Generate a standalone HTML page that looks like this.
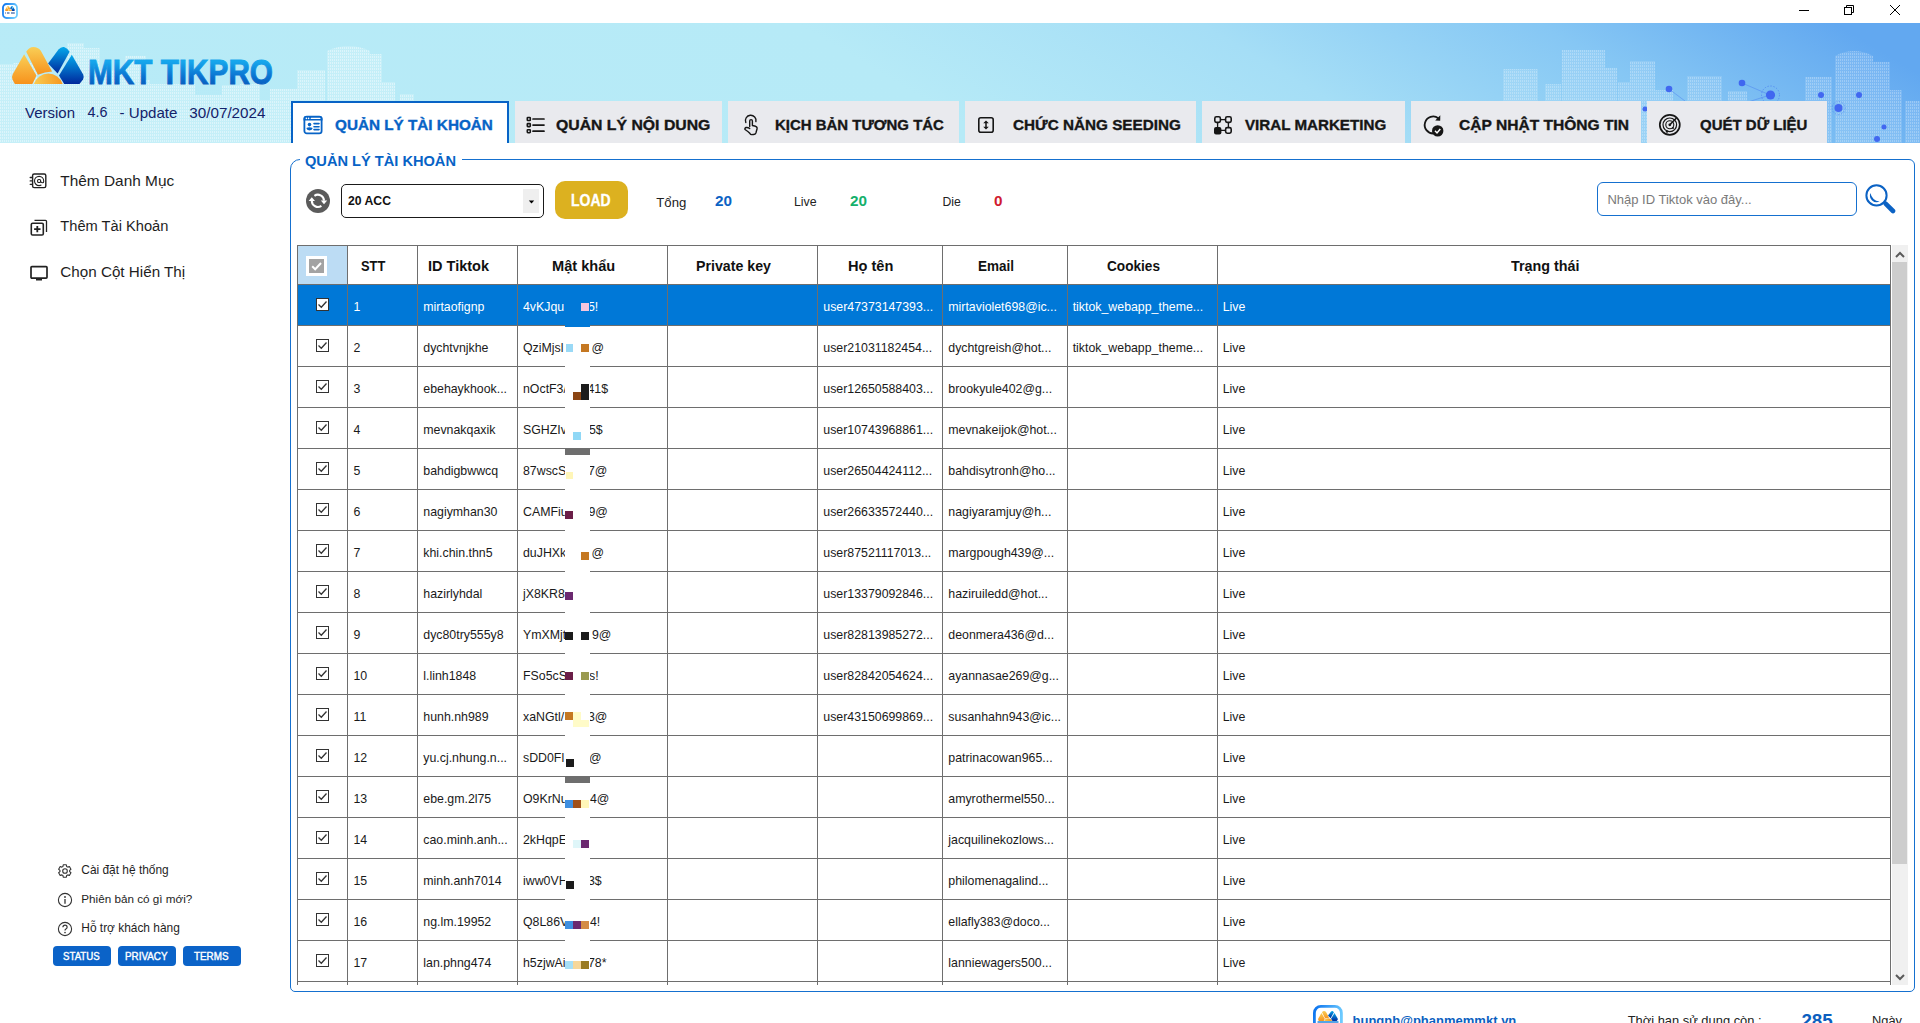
<!DOCTYPE html><html><head><meta charset="utf-8"><style>
html,body{margin:0;padding:0}
body{width:1920px;height:1023px;position:relative;overflow:hidden;background:#fff;font-family:"Liberation Sans",sans-serif}
.t{position:absolute;white-space:nowrap;line-height:1}
.r{position:absolute;display:block}
</style></head><body>
<svg class="r" style="left:2px;top:3px;" width="16" height="16" viewBox="0 0 16 16"><rect x="1" y="1" width="14" height="14" rx="3.5" fill="#fff" stroke="url(#fb)" stroke-width="1.8"/><g transform="translate(1.42,-3.54) scale(0.137)"><path d="M24.1 54.3 L12.6 74.5 Q11.5 77 12.5 79.5 L14.8 83.9 L32.4 83.9 L36.5 75.5 Z" fill="url(#og)"/><path d="M26.2 51.8 Q29 47 33.5 47 Q38 47 40.8 50.7 L52.1 71.5 Q45 72 37.9 74.7 Z" fill="url(#og)"/><path d="M33.9 83.9 A15.2 15.2 0 0 1 62.7 83.9 Z" fill="url(#og2)"/><path d="M48.1 63.4 L58.5 49.5 Q61 46.5 64 47 Q67.5 48 69.6 51.8 L57.6 73.6 Z" fill="url(#bg)"/><path d="M71.8 54.7 L83.2 74.5 Q84.3 77 83 79.5 L79.5 83.9 L64.2 83.9 L59 75.5 Z" fill="url(#bg)"/></g><path d="M3.2 10 H4 M5 10 H7.5 M9 10 H12.8" stroke="#0b3d91" stroke-width="1.1"/></svg>
<svg class="r" style="left:1795px;top:0px;" width="120" height="23" viewBox="0 0 120 23"><line x1="4" y1="10.5" x2="14" y2="10.5" stroke="#000" stroke-width="1"/><rect x="49.5" y="7.5" width="7" height="7" fill="none" stroke="#000" stroke-width="1"/><path d="M51.5 7.5 V5.5 H58.5 V12.5 H56.5" fill="none" stroke="#000" stroke-width="1"/><path d="M95 5 L105 15 M105 5 L95 15" stroke="#000" stroke-width="1"/></svg>
<div class="r" style="left:0;top:23px;width:1920px;height:120px;background:linear-gradient(31deg,#b8ebf7 4.7%,#b6eaf7 47%,#a5def6 66%,#86c7f4 82%,#62a8f0 96%)"></div>
<svg class="r" style="left:0px;top:23px;" width="1920" height="120" viewBox="0 0 1920 120"><defs><pattern id="win" width="2" height="3" patternUnits="userSpaceOnUse"><rect width="2" height="3" fill="#ffffff" opacity="0.18"/><rect x="0" y="0" width="1" height="2" fill="#ffffff" opacity="0.4"/></pattern></defs><rect x="0" y="41" width="13" height="79" fill="url(#win)" opacity="1.0"/><rect x="13" y="40" width="24" height="80" fill="url(#win)" opacity="1.0"/><rect x="37" y="60" width="23" height="60" fill="url(#win)" opacity="1.0"/><rect x="60" y="57" width="7" height="63" fill="url(#win)" opacity="1.0"/><rect x="67" y="20" width="17" height="100" fill="url(#win)" opacity="1.0"/><rect x="84" y="25" width="16" height="95" fill="url(#win)" opacity="1.0"/><rect x="100" y="47" width="25" height="73" fill="url(#win)" opacity="1.0"/><rect x="125" y="33" width="21" height="87" fill="url(#win)" opacity="1.0"/><rect x="146" y="57" width="4" height="63" fill="url(#win)" opacity="1.0"/><rect x="150" y="61" width="25" height="59" fill="url(#win)" opacity="1.0"/><rect x="175" y="61" width="20" height="59" fill="url(#win)" opacity="1.0"/><rect x="195" y="72" width="27" height="48" fill="url(#win)" opacity="1.0"/><rect x="222" y="62" width="18" height="58" fill="url(#win)" opacity="1.0"/><rect x="240" y="61" width="20" height="59" fill="url(#win)" opacity="1.0"/><rect x="260" y="77" width="10" height="43" fill="url(#win)" opacity="1.0"/><rect x="270" y="66" width="27" height="54" fill="url(#win)" opacity="1.0"/><rect x="297" y="47" width="28" height="73" fill="url(#win)" opacity="1.0"/><rect x="370" y="31" width="12" height="89" fill="url(#win)" opacity="1.0"/><rect x="382" y="59" width="13" height="61" fill="url(#win)" opacity="1.0"/><rect x="400" y="71" width="14" height="49" fill="url(#win)" opacity="1.0"/><rect x="415" y="95" width="40" height="25" fill="url(#win)" opacity="1.0"/><path d="M327 120 V28 Q348.5 18 370 28 V120Z" fill="url(#win)" opacity="1.0"/><rect x="1503" y="46" width="35" height="74" fill="url(#win)" opacity="0.65"/><rect x="1545" y="61" width="16" height="59" fill="url(#win)" opacity="0.65"/><rect x="1562" y="27" width="43" height="93" fill="url(#win)" opacity="0.65"/><rect x="1605" y="45" width="12" height="75" fill="url(#win)" opacity="0.65"/><rect x="1618" y="59" width="12" height="61" fill="url(#win)" opacity="0.65"/><rect x="1630" y="38" width="25" height="82" fill="url(#win)" opacity="0.65"/><rect x="1655" y="67" width="18" height="53" fill="url(#win)" opacity="0.65"/><rect x="1687" y="53" width="35" height="67" fill="url(#win)" opacity="0.65"/><rect x="1728" y="68" width="19" height="52" fill="url(#win)" opacity="0.65"/><rect x="1805" y="54" width="27" height="66" fill="url(#win)" opacity="0.65"/><rect x="1873" y="39" width="17" height="81" fill="url(#win)" opacity="0.65"/><rect x="1890" y="67" width="12" height="53" fill="url(#win)" opacity="0.65"/><rect x="1905" y="78" width="15" height="42" fill="url(#win)" opacity="0.65"/><path d="M1835 120 V33 Q1854.0 23 1873 33 V120Z" fill="url(#win)" opacity="0.65"/><g fill="#3a5ef0" opacity="0.9"><circle cx="1669" cy="66" r="3.3"/><circle cx="1742" cy="60" r="3.3"/><circle cx="1770.5" cy="72" r="4.6"/><circle cx="1859" cy="72" r="3"/><circle cx="1821" cy="72" r="3"/><circle cx="1838.5" cy="85" r="4"/><circle cx="1645" cy="86" r="2.5"/><circle cx="1884" cy="104" r="2.5"/><circle cx="1877" cy="116" r="3"/></g><g stroke="#3a6cf0" stroke-width="0.8" opacity="0.45"><line x1="1742" y1="60" x2="1770" y2="72"/><line x1="1669" y1="66" x2="1685" y2="78"/><line x1="1770" y1="72" x2="1745" y2="80"/></g><circle cx="1770.5" cy="72" r="9" fill="none" stroke="#3a6cf0" stroke-width="0.8" stroke-dasharray="1.5 1.5" opacity="0.6"/><circle cx="1838.5" cy="85" r="6.5" fill="none" stroke="#3a6cf0" stroke-width="0.8" stroke-dasharray="1.5 1.5" opacity="0.5"/></svg>
<svg class="r" style="left:0px;top:40px;" width="90" height="50" viewBox="0 0 90 50"><defs>
<linearGradient id="og" x1="0" y1="0" x2="0" y2="1"><stop offset="0" stop-color="#f9cf57"/><stop offset="1" stop-color="#f7921c"/></linearGradient>
<linearGradient id="og2" x1="0" y1="0" x2="1" y2="0"><stop offset="0" stop-color="#f9cb52"/><stop offset="1" stop-color="#f7971f"/></linearGradient>
<linearGradient id="bg" x1="0" y1="0" x2="0" y2="1"><stop offset="0" stop-color="#04a9ec"/><stop offset="1" stop-color="#00289c"/></linearGradient>
</defs><g transform="translate(0,-40)">
<path d="M24.1 54.3 L12.6 74.5 Q11.5 77 12.5 79.5 L14.8 83.9 L32.4 83.9 L36.5 75.5 Z" fill="url(#og)"/>
<path d="M26.2 51.8 Q29 47 33.5 47 Q38 47 40.8 50.7 L52.1 71.5 Q45 72 37.9 74.7 Z" fill="url(#og)"/>
<path d="M33.9 83.9 A15.2 15.2 0 0 1 62.7 83.9 Z" fill="url(#og2)"/>
<path d="M48.1 63.4 L58.5 49.5 Q61 46.5 64 47 Q67.5 48 69.6 51.8 L57.6 73.6 Z" fill="url(#bg)"/>
<path d="M71.8 54.7 L83.2 74.5 Q84.3 77 83 79.5 L79.5 83.9 L64.2 83.9 L59 75.5 Z" fill="url(#bg)"/>
</g></svg>
<svg class="r" style="left:86px;top:50px;" width="200" height="40" viewBox="0 0 200 40"><defs><linearGradient id="tg" x1="0" y1="0" x2="0" y2="1"><stop offset="0.25" stop-color="#16a6ec"/><stop offset="0.65" stop-color="#0a70cf"/><stop offset="1" stop-color="#0552b3"/></linearGradient></defs><text x="2" y="34" font-family="Liberation Sans" font-weight="bold" font-size="35" fill="url(#tg)" stroke="url(#tg)" stroke-width="0.9" textLength="185" lengthAdjust="spacingAndGlyphs">MKT TIKPRO</text></svg>
<div class="t" style="left:25.00px;top:104.81px;font-size:14.99px;color:#13226a;">Version</div>
<div class="t" style="left:87.50px;top:105.32px;font-size:14.39px;color:#13226a;">4.6</div>
<div class="t" style="left:119.50px;top:104.70px;font-size:15.12px;color:#13226a;">- Update</div>
<div class="t" style="left:189.30px;top:104.61px;font-size:15.23px;color:#13226a;">30/07/2024</div>
<div class="r" style="left:291px;top:101px;width:214px;height:40px;background:#fff;border:2px solid #0763c6;border-bottom:none"></div>
<div class="t" style="left:334.50px;top:118.44px;font-size:14.59px;font-weight:bold;color:#0763c6;transform:scaleX(1.0480);transform-origin:0 0;-webkit-text-stroke:0.35px #0763c6;">QUẢN LÝ TÀI KHOẢN</div>
<div class="r" style="left:515px;top:101px;width:207px;height:42px;background:#e9eaee;"></div>
<div class="t" style="left:556.00px;top:118.44px;font-size:14.59px;font-weight:bold;color:#161616;transform:scaleX(1.0830);transform-origin:0 0;-webkit-text-stroke:0.35px #161616;">QUẢN LÝ NỘI DUNG</div>
<div class="r" style="left:728px;top:101px;width:231px;height:42px;background:#e9eaee;"></div>
<div class="t" style="left:774.50px;top:118.44px;font-size:14.59px;font-weight:bold;color:#161616;transform:scaleX(1.0257);transform-origin:0 0;-webkit-text-stroke:0.35px #161616;">KỊCH BẢN TƯƠNG TÁC</div>
<div class="r" style="left:965px;top:101px;width:231px;height:42px;background:#e9eaee;"></div>
<div class="t" style="left:1012.50px;top:118.44px;font-size:14.59px;font-weight:bold;color:#161616;transform:scaleX(1.0471);transform-origin:0 0;-webkit-text-stroke:0.35px #161616;">CHỨC NĂNG SEEDING</div>
<div class="r" style="left:1202px;top:101px;width:203px;height:42px;background:#e9eaee;"></div>
<div class="t" style="left:1244.50px;top:118.44px;font-size:14.59px;font-weight:bold;color:#161616;transform:scaleX(1.0397);transform-origin:0 0;-webkit-text-stroke:0.35px #161616;">VIRAL MARKETING</div>
<div class="r" style="left:1411px;top:101px;width:230px;height:42px;background:#e9eaee;"></div>
<div class="t" style="left:1458.75px;top:118.44px;font-size:14.59px;font-weight:bold;color:#161616;transform:scaleX(1.0677);transform-origin:0 0;-webkit-text-stroke:0.35px #161616;">CẬP NHẬT THÔNG TIN</div>
<div class="r" style="left:1647px;top:101px;width:180px;height:42px;background:#e9eaee;"></div>
<div class="t" style="left:1699.50px;top:118.44px;font-size:14.59px;font-weight:bold;color:#161616;transform:scaleX(1.0286);transform-origin:0 0;-webkit-text-stroke:0.35px #161616;">QUÉT DỮ LIỆU</div>
<svg class="r" style="left:302px;top:115px;" width="22" height="21" viewBox="0 0 22 21"><rect x="2.4" y="1.6" width="17.2" height="16.7" rx="2.4" fill="none" stroke="#0763c6" stroke-width="1.8"/><path d="M1.5 5.6 V4 Q1.5 1 4.5 1 H17.5 Q20.5 1 20.5 4 V5.6Z" fill="#0763c6"/><circle cx="4.4" cy="3.4" r="0.8" fill="#fff"/><circle cx="6.6" cy="3.4" r="0.8" fill="#fff"/><path d="M9.3 3.4 H17.9" stroke="#fff" stroke-width="1.3" stroke-linecap="round"/><circle cx="7.5" cy="9.6" r="1.8" fill="#0763c6"/><path d="M4.3 13.1 Q7.5 11.6 10.7 13.1 Q10.3 15.4 7.5 15.4 Q4.7 15.4 4.3 13.1Z" fill="#0763c6"/><path d="M12 8.6 H17 M12 11.7 H17 M12 14.6 H17" stroke="#0763c6" stroke-width="1.6" stroke-linecap="round"/></svg>
<svg class="r" style="left:525px;top:115px;" width="22" height="20" viewBox="0 0 22 20"><g fill="none" stroke="#161616" stroke-width="1.6"><rect x="2.3" y="2.5" width="3" height="3" rx="0.6"/><rect x="2.3" y="8.6" width="3" height="3" rx="0.6"/><rect x="2.3" y="14.7" width="3" height="3" rx="0.6"/></g><path d="M8 4 H19 M8 10.1 H19 M8 16.2 H19" stroke="#161616" stroke-width="1.7" stroke-linecap="round"/></svg>
<svg class="r" style="left:742px;top:114px;" width="18" height="22" viewBox="0 0 18 22"><g fill="none" stroke="#161616" stroke-width="1.4" stroke-linecap="round" stroke-linejoin="round"><path d="M3.8 8.5 A5.3 5.3 0 1 1 13.9 7.6"/><path d="M7.7 12.5 V7 A1.3 1.3 0 0 1 10.4 7 V11.5 L13.6 12.3 Q15.5 13 15 15 L13.9 19 Q13.3 20.5 11.5 20.5 L9.6 20.6 Q8.6 20.6 7.8 19.3 Q6.8 18 3 15.5 Q2.5 14 4 13.5 Q6 13.2 7.7 14.5"/></g></svg>
<svg class="r" style="left:977px;top:116px;" width="18" height="18" viewBox="0 0 18 18"><rect x="1.8" y="1.8" width="14.4" height="14.4" rx="2" fill="none" stroke="#161616" stroke-width="1.6"/><path d="M9 4.5 L6.2 7.3 H11.8Z M9 13.5 L6.2 10.7 H11.8Z" fill="#161616"/><line x1="9" y1="6" x2="9" y2="12" stroke="#161616" stroke-width="1.5"/></svg>
<svg class="r" style="left:1213px;top:115px;" width="20" height="20" viewBox="0 0 20 20"><g fill="none" stroke="#161616" stroke-width="1.6"><rect x="1.8" y="1.8" width="5.6" height="5.6" rx="1.6"/><rect x="12.6" y="1.8" width="5.6" height="5.6" rx="1.6"/><rect x="12.6" y="12.6" width="5.6" height="5.6" rx="1.6"/></g><rect x="1" y="12" width="7.4" height="7.4" rx="2" fill="#161616"/><path d="M7.4 4.6 H12.6 M4.6 7.4 V12.6 M15.4 7.4 V12.6 M7.4 15.4 H12.6" stroke="#161616" stroke-width="1.3"/></svg>
<svg class="r" style="left:1420px;top:113px;" width="24" height="24" viewBox="0 0 24 24"><path d="M18.3 5.2 A8.5 8.5 0 1 0 13.5 20.5" fill="none" stroke="#161616" stroke-width="1.8"/><path d="M20.3 2.2 L20.2 7.7 L15.2 7.4 Z" fill="#161616"/><circle cx="17.7" cy="17.9" r="5.7" fill="#161616"/><path d="M15 17.8 L17 19.9 L20.3 16" fill="none" stroke="#fff" stroke-width="1.5"/></svg>
<svg class="r" style="left:1658px;top:113px;" width="24" height="24" viewBox="0 0 24 24"><circle cx="11.8" cy="11.8" r="10" fill="none" stroke="#161616" stroke-width="1.7"/><circle cx="11.8" cy="11.8" r="6.8" fill="none" stroke="#161616" stroke-width="1.2"/><circle cx="11.8" cy="11.8" r="4" fill="none" stroke="#161616" stroke-width="1.1"/><circle cx="11.8" cy="11.8" r="1.4" fill="#161616"/><path d="M11.8 11.8 L18.5 5" stroke="#161616" stroke-width="1.6"/><circle cx="9" cy="18.5" r="1.2" fill="#161616"/><circle cx="15" cy="15" r="1" fill="#161616"/></svg>
<div class="t" style="left:60.30px;top:172.74px;font-size:15.42px;color:#1e1e1e;">Thêm Danh Mục</div>
<div class="t" style="left:60.30px;top:219.18px;font-size:14.67px;color:#1e1e1e;">Thêm Tài Khoản</div>
<div class="t" style="left:60.30px;top:264.31px;font-size:15.23px;color:#1e1e1e;">Chọn Cột Hiển Thị</div>
<svg class="r" style="left:29px;top:172px;" width="20" height="18" viewBox="0 0 20 18"><rect x="3.6" y="2" width="13.2" height="13.6" rx="1.6" fill="none" stroke="#222" stroke-width="1.4"/><path d="M1.2 5.5 H3.4 M1.2 8.9 H3.4 M1.2 12.3 H3.4" stroke="#222" stroke-width="1.3" stroke-linecap="round"/><rect x="8.6" y="7.5" width="3" height="3" rx="1" fill="none" stroke="#222" stroke-width="1.1"/><path d="M12.4 13.1 Q11.3 13.6 10.1 13.6 A4.6 4.6 0 1 1 14.7 9 V9.4 Q14.7 10.7 13.5 10.7 Q11.7 10.7 11.7 9.2" fill="none" stroke="#222" stroke-width="1.1"/></svg>
<svg class="r" style="left:29px;top:218px;" width="20" height="19" viewBox="0 0 20 19"><rect x="2.3" y="5.3" width="12" height="11.7" rx="1.3" fill="none" stroke="#222" stroke-width="1.6"/><path d="M5.5 2.3 H16.5 Q17.5 2.3 17.5 3.3 V14" fill="none" stroke="#222" stroke-width="1.3"/><path d="M8.3 8 V14.3 M5.1 11.1 H11.5" stroke="#222" stroke-width="1.8"/></svg>
<svg class="r" style="left:29px;top:264px;" width="21" height="18" viewBox="0 0 21 18"><rect x="2" y="2.6" width="16" height="11.6" rx="0.9" fill="none" stroke="#222" stroke-width="1.7"/><rect x="7" y="15" width="6" height="1.5" fill="#222"/></svg>
<div class="t" style="left:81.30px;top:864.91px;font-size:11.92px;color:#1e1e1e;">Cài đặt hệ thống</div>
<div class="t" style="left:81.30px;top:893.40px;font-size:11.69px;color:#1e1e1e;">Phiên bản có gì mới?</div>
<div class="t" style="left:81.30px;top:922.92px;font-size:11.91px;color:#1e1e1e;">Hỗ trợ khách hàng</div>
<svg class="r" style="left:57px;top:863px;" width="16" height="16" viewBox="0 0 16 16"><circle cx="8" cy="8" r="2.3" fill="none" stroke="#333" stroke-width="1.1"/><path d="M5.96 3.46 L6.25 1.79 L9.35 1.79 L9.64 3.46 L10.82 4.14 L12.40 3.55 L13.95 6.24 L12.65 7.32 L12.65 8.68 L13.95 9.76 L12.40 12.45 L10.82 11.86 L9.64 12.54 L9.35 14.21 L6.25 14.21 L5.96 12.54 L4.78 11.86 L3.20 12.45 L1.65 9.76 L2.95 8.68 L2.95 7.32 L1.65 6.24 L3.20 3.55 L4.78 4.14Z" fill="none" stroke="#333" stroke-width="1.1" stroke-linejoin="round"/></svg>
<svg class="r" style="left:57px;top:892px;" width="16" height="16" viewBox="0 0 16 16"><circle cx="8" cy="8" r="6.6" fill="none" stroke="#333" stroke-width="1.1"/><circle cx="8" cy="5" r="0.9" fill="#333"/><path d="M8 7 V11.8" stroke="#333" stroke-width="1.3"/></svg>
<svg class="r" style="left:57px;top:921px;" width="16" height="16" viewBox="0 0 16 16"><circle cx="8" cy="8" r="6.6" fill="none" stroke="#333" stroke-width="1.1"/><path d="M5.9 6.3 Q6 4.2 8 4.2 Q10.1 4.2 10.1 6.2 Q10.1 7.4 8.9 8 Q8 8.5 8 9.6" fill="none" stroke="#333" stroke-width="1.2"/><circle cx="8" cy="11.6" r="0.8" fill="#333"/></svg>
<div class="r" style="left:53px;top:946px;width:58px;height:20px;background:#0b63c8;border-radius:4px"></div>
<div class="t" style="left:63.30px;top:950.76px;font-size:10.68px;color:#fff;transform:scaleX(0.9060);transform-origin:0 0;-webkit-text-stroke:0.4px #fff;">STATUS</div>
<div class="r" style="left:118px;top:946px;width:58px;height:20px;background:#0b63c8;border-radius:4px"></div>
<div class="t" style="left:125.20px;top:950.76px;font-size:10.68px;color:#fff;transform:scaleX(0.9229);transform-origin:0 0;-webkit-text-stroke:0.4px #fff;">PRIVACY</div>
<div class="r" style="left:183px;top:946px;width:58px;height:20px;background:#0b63c8;border-radius:4px"></div>
<div class="t" style="left:194.20px;top:950.76px;font-size:10.68px;color:#fff;transform:scaleX(0.9238);transform-origin:0 0;-webkit-text-stroke:0.4px #fff;">TERMS</div>
<div class="r" style="left:290px;top:159px;width:1623px;height:831px;border:1px solid #1570cf;border-radius:10px 6px 5px 5px"></div>
<div class="r" style="left:300px;top:150px;width:162px;height:16px;background:#fff;"></div>
<div class="t" style="left:305.30px;top:153.90px;font-size:14.05px;font-weight:bold;color:#0763c6;transform:scaleX(1.0401);transform-origin:0 0;">QUẢN LÝ TÀI KHOẢN</div>
<svg class="r" style="left:305px;top:188px;" width="26" height="26" viewBox="0 0 26 26"><circle cx="13" cy="13" r="12" fill="#5b5b5b"/><g fill="none" stroke="#fff" stroke-width="2.1"><path d="M9.4 7.8 A6.1 6.1 0 0 1 19 12.6"/><path d="M16.4 17.8 A6.1 6.1 0 0 1 6.8 13"/></g><path d="M15.8 12.6 L22.2 12.6 L19 16.3 Z M3.6 13 L10 13 L6.8 9.3 Z" fill="#fff"/></svg>
<div class="r" style="left:341px;top:184px;width:201px;height:32px;border:1.3px solid #1a1a1a;border-radius:5px;background:#fff"></div>
<div class="r" style="left:523px;top:189px;width:16px;height:24px;background:#efefef;"></div>
<svg class="r" style="left:527.5px;top:199.5px;" width="8" height="5" viewBox="0 0 8 5"><path d="M0.8 0.6 L6.2 0.6 L3.5 3.4Z" fill="#000"/></svg>
<div class="t" style="left:348.00px;top:193.59px;font-size:13.24px;font-weight:bold;color:#111;transform:scaleX(0.9228);transform-origin:0 0;">20 ACC</div>
<div class="r" style="left:555px;top:181px;width:73px;height:38px;background:#dcb120;border-radius:10px"></div>
<div class="t" style="left:570.80px;top:193.03px;font-size:15.68px;font-weight:bold;color:#fff;transform:scaleX(0.8920);transform-origin:0 0;-webkit-text-stroke:0.3px #fff;">LOAD</div>
<div class="t" style="left:656.30px;top:195.86px;font-size:13.16px;color:#222;">Tổng</div>
<div class="t" style="left:714.70px;top:194.23px;font-size:14.73px;font-weight:bold;color:#0b62c4;transform:scaleX(1.0383);transform-origin:0 0;">20</div>
<div class="t" style="left:794.00px;top:196.22px;font-size:12.37px;color:#222;">Live</div>
<div class="t" style="left:849.50px;top:194.23px;font-size:14.73px;font-weight:bold;color:#14b06c;transform:scaleX(1.0383);transform-origin:0 0;">20</div>
<div class="t" style="left:942.50px;top:196.37px;font-size:12.20px;color:#222;">Die</div>
<div class="t" style="left:994.00px;top:194.23px;font-size:14.73px;font-weight:bold;color:#d01a2e;transform:scaleX(1.0383);transform-origin:0 0;">0</div>
<div class="r" style="left:1597px;top:182px;width:258px;height:32px;border:1.5px solid #1570cf;border-radius:6px;background:#fff"></div>
<div class="t" style="left:1607.40px;top:192.58px;font-size:13.01px;color:#7a7a7a;">Nhập ID Tiktok vào đây...</div>
<svg class="r" style="left:1862px;top:182px;" width="34" height="34" viewBox="0 0 34 34"><circle cx="14.5" cy="13.4" r="10.1" fill="none" stroke="#0b62c4" stroke-width="2"/><path d="M8.4 11 A6.8 6.8 0 0 0 17.6 19.6 A11 11 0 0 1 8.4 11 Z" fill="#0b62c4"/><path d="M23.6 21.6 L31 29" stroke="#0b62c4" stroke-width="4.6" stroke-linecap="round"/></svg>
<div class="r" style="left:298px;top:246px;width:49px;height:38px;background:#bcdcf4;"></div>
<div class="r" style="left:298px;top:285px;width:1592px;height:40px;background:#0078d7;"></div>
<div class="r" style="left:297px;top:245px;width:1594px;height:1px;background:#6e6e6e"></div>
<div class="r" style="left:297px;top:284px;width:1594px;height:1px;background:#6e6e6e"></div>
<div class="r" style="left:297px;top:325px;width:1594px;height:1px;background:#6e6e6e"></div>
<div class="r" style="left:297px;top:366px;width:1594px;height:1px;background:#6e6e6e"></div>
<div class="r" style="left:297px;top:407px;width:1594px;height:1px;background:#6e6e6e"></div>
<div class="r" style="left:297px;top:448px;width:1594px;height:1px;background:#6e6e6e"></div>
<div class="r" style="left:297px;top:489px;width:1594px;height:1px;background:#6e6e6e"></div>
<div class="r" style="left:297px;top:530px;width:1594px;height:1px;background:#6e6e6e"></div>
<div class="r" style="left:297px;top:571px;width:1594px;height:1px;background:#6e6e6e"></div>
<div class="r" style="left:297px;top:612px;width:1594px;height:1px;background:#6e6e6e"></div>
<div class="r" style="left:297px;top:653px;width:1594px;height:1px;background:#6e6e6e"></div>
<div class="r" style="left:297px;top:694px;width:1594px;height:1px;background:#6e6e6e"></div>
<div class="r" style="left:297px;top:735px;width:1594px;height:1px;background:#6e6e6e"></div>
<div class="r" style="left:297px;top:776px;width:1594px;height:1px;background:#6e6e6e"></div>
<div class="r" style="left:297px;top:817px;width:1594px;height:1px;background:#6e6e6e"></div>
<div class="r" style="left:297px;top:858px;width:1594px;height:1px;background:#6e6e6e"></div>
<div class="r" style="left:297px;top:899px;width:1594px;height:1px;background:#6e6e6e"></div>
<div class="r" style="left:297px;top:940px;width:1594px;height:1px;background:#6e6e6e"></div>
<div class="r" style="left:297px;top:981px;width:1594px;height:1px;background:#6e6e6e"></div>
<div class="r" style="left:297px;top:245px;width:1px;height:740px;background:#6e6e6e"></div>
<div class="r" style="left:347px;top:245px;width:1px;height:740px;background:#6e6e6e"></div>
<div class="r" style="left:417px;top:245px;width:1px;height:740px;background:#6e6e6e"></div>
<div class="r" style="left:517px;top:245px;width:1px;height:740px;background:#6e6e6e"></div>
<div class="r" style="left:667px;top:245px;width:1px;height:740px;background:#6e6e6e"></div>
<div class="r" style="left:817px;top:245px;width:1px;height:740px;background:#6e6e6e"></div>
<div class="r" style="left:942px;top:245px;width:1px;height:740px;background:#6e6e6e"></div>
<div class="r" style="left:1067px;top:245px;width:1px;height:740px;background:#6e6e6e"></div>
<div class="r" style="left:1217px;top:245px;width:1px;height:740px;background:#6e6e6e"></div>
<div class="r" style="left:1890px;top:245px;width:1px;height:740px;background:#6e6e6e"></div>
<div class="r" style="left:306px;top:256px;width:21px;height:20px;background:#fff;"></div>
<div class="r" style="left:309px;top:259px;width:15px;height:14px;background:#a3a3a3;"></div>
<svg class="r" style="left:309px;top:259px;" width="15" height="14" viewBox="0 0 15 14"><path d="M3.2 7.2 L6.2 10.2 L12 4" fill="none" stroke="#fff" stroke-width="2"/></svg>
<div class="t" style="left:361.35px;top:258.60px;font-size:14.05px;font-weight:bold;color:#111;transform:scaleX(0.9157);transform-origin:0 0;">STT</div>
<div class="t" style="left:428.00px;top:258.60px;font-size:14.05px;font-weight:bold;color:#111;transform:scaleX(1.0326);transform-origin:0 0;">ID Tiktok</div>
<div class="t" style="left:551.85px;top:258.60px;font-size:14.05px;font-weight:bold;color:#111;transform:scaleX(1.0395);transform-origin:0 0;">Mật khẩu</div>
<div class="t" style="left:696.00px;top:258.60px;font-size:14.05px;font-weight:bold;color:#111;transform:scaleX(1.0107);transform-origin:0 0;">Private key</div>
<div class="t" style="left:848.30px;top:258.60px;font-size:14.05px;font-weight:bold;color:#111;transform:scaleX(1.0387);transform-origin:0 0;">Họ tên</div>
<div class="t" style="left:978.00px;top:258.60px;font-size:14.05px;font-weight:bold;color:#111;transform:scaleX(0.9604);transform-origin:0 0;">Email</div>
<div class="t" style="left:1107.00px;top:258.60px;font-size:14.05px;font-weight:bold;color:#111;transform:scaleX(0.9697);transform-origin:0 0;">Cookies</div>
<div class="t" style="left:1510.70px;top:258.60px;font-size:14.05px;font-weight:bold;color:#111;transform:scaleX(1.0218);transform-origin:0 0;">Trạng thái</div>
<div class="t" style="left:353.50px;top:300.54px;font-size:12.35px;color:#fff;">1</div>
<div class="t" style="left:423.30px;top:300.54px;font-size:12.35px;color:#fff;">mirtaofignp</div>
<div class="t" style="left:523.00px;top:300.54px;font-size:12.35px;color:#fff;">4vKJqu</div>
<div class="t" style="left:588.00px;top:300.54px;font-size:12.35px;color:#fff;">5!</div>
<div class="t" style="left:823.30px;top:300.54px;font-size:12.35px;color:#fff;">user47373147393...</div>
<div class="t" style="left:948.30px;top:300.54px;font-size:12.35px;color:#fff;">mirtaviolet698@ic...</div>
<div class="t" style="left:1072.70px;top:300.54px;font-size:12.35px;color:#fff;">tiktok_webapp_theme...</div>
<div class="t" style="left:1222.70px;top:300.54px;font-size:12.35px;color:#fff;">Live</div>
<div class="r" style="left:316px;top:298px;width:11px;height:11px;border:1px solid #333;background:#fff"></div>
<svg class="r" style="left:316px;top:298px;" width="13" height="13" viewBox="0 0 13 13"><path d="M2.5 6.5 L5.3 9.3 L10.5 3.5" fill="none" stroke="#333" stroke-width="1.3"/></svg>
<div class="t" style="left:353.50px;top:341.54px;font-size:12.35px;color:#1a1a1a;">2</div>
<div class="t" style="left:423.30px;top:341.54px;font-size:12.35px;color:#1a1a1a;">dychtvnjkhe</div>
<div class="t" style="left:523.00px;top:341.54px;font-size:12.35px;color:#1a1a1a;">QziMjsl</div>
<div class="t" style="left:591.50px;top:341.54px;font-size:12.35px;color:#1a1a1a;">@</div>
<div class="t" style="left:823.30px;top:341.54px;font-size:12.35px;color:#1a1a1a;">user21031182454...</div>
<div class="t" style="left:948.30px;top:341.54px;font-size:12.35px;color:#1a1a1a;">dychtgreish@hot...</div>
<div class="t" style="left:1072.70px;top:341.54px;font-size:12.35px;color:#1a1a1a;">tiktok_webapp_theme...</div>
<div class="t" style="left:1222.70px;top:341.54px;font-size:12.35px;color:#1a1a1a;">Live</div>
<div class="r" style="left:316px;top:339px;width:11px;height:11px;border:1px solid #333;background:#fff"></div>
<svg class="r" style="left:316px;top:339px;" width="13" height="13" viewBox="0 0 13 13"><path d="M2.5 6.5 L5.3 9.3 L10.5 3.5" fill="none" stroke="#333" stroke-width="1.3"/></svg>
<div class="t" style="left:353.50px;top:382.54px;font-size:12.35px;color:#1a1a1a;">3</div>
<div class="t" style="left:423.30px;top:382.54px;font-size:12.35px;color:#1a1a1a;">ebehaykhook...</div>
<div class="t" style="left:523.00px;top:382.54px;font-size:12.35px;color:#1a1a1a;">nOctF3/</div>
<div class="t" style="left:587.50px;top:382.54px;font-size:12.35px;color:#1a1a1a;">41$</div>
<div class="t" style="left:823.30px;top:382.54px;font-size:12.35px;color:#1a1a1a;">user12650588403...</div>
<div class="t" style="left:948.30px;top:382.54px;font-size:12.35px;color:#1a1a1a;">brookyule402@g...</div>
<div class="t" style="left:1222.70px;top:382.54px;font-size:12.35px;color:#1a1a1a;">Live</div>
<div class="r" style="left:316px;top:380px;width:11px;height:11px;border:1px solid #333;background:#fff"></div>
<svg class="r" style="left:316px;top:380px;" width="13" height="13" viewBox="0 0 13 13"><path d="M2.5 6.5 L5.3 9.3 L10.5 3.5" fill="none" stroke="#333" stroke-width="1.3"/></svg>
<div class="t" style="left:353.50px;top:423.54px;font-size:12.35px;color:#1a1a1a;">4</div>
<div class="t" style="left:423.30px;top:423.54px;font-size:12.35px;color:#1a1a1a;">mevnakqaxik</div>
<div class="t" style="left:523.00px;top:423.54px;font-size:12.35px;color:#1a1a1a;">SGHZIv</div>
<div class="t" style="left:589.00px;top:423.54px;font-size:12.35px;color:#1a1a1a;">5$</div>
<div class="t" style="left:823.30px;top:423.54px;font-size:12.35px;color:#1a1a1a;">user10743968861...</div>
<div class="t" style="left:948.30px;top:423.54px;font-size:12.35px;color:#1a1a1a;">mevnakeijok@hot...</div>
<div class="t" style="left:1222.70px;top:423.54px;font-size:12.35px;color:#1a1a1a;">Live</div>
<div class="r" style="left:316px;top:421px;width:11px;height:11px;border:1px solid #333;background:#fff"></div>
<svg class="r" style="left:316px;top:421px;" width="13" height="13" viewBox="0 0 13 13"><path d="M2.5 6.5 L5.3 9.3 L10.5 3.5" fill="none" stroke="#333" stroke-width="1.3"/></svg>
<div class="t" style="left:353.50px;top:464.54px;font-size:12.35px;color:#1a1a1a;">5</div>
<div class="t" style="left:423.30px;top:464.54px;font-size:12.35px;color:#1a1a1a;">bahdigbwwcq</div>
<div class="t" style="left:523.00px;top:464.54px;font-size:12.35px;color:#1a1a1a;">87wscS</div>
<div class="t" style="left:588.00px;top:464.54px;font-size:12.35px;color:#1a1a1a;">7@</div>
<div class="t" style="left:823.30px;top:464.54px;font-size:12.35px;color:#1a1a1a;">user26504424112...</div>
<div class="t" style="left:948.30px;top:464.54px;font-size:12.35px;color:#1a1a1a;">bahdisytronh@ho...</div>
<div class="t" style="left:1222.70px;top:464.54px;font-size:12.35px;color:#1a1a1a;">Live</div>
<div class="r" style="left:316px;top:462px;width:11px;height:11px;border:1px solid #333;background:#fff"></div>
<svg class="r" style="left:316px;top:462px;" width="13" height="13" viewBox="0 0 13 13"><path d="M2.5 6.5 L5.3 9.3 L10.5 3.5" fill="none" stroke="#333" stroke-width="1.3"/></svg>
<div class="t" style="left:353.50px;top:505.54px;font-size:12.35px;color:#1a1a1a;">6</div>
<div class="t" style="left:423.30px;top:505.54px;font-size:12.35px;color:#1a1a1a;">nagiymhan30</div>
<div class="t" style="left:523.00px;top:505.54px;font-size:12.35px;color:#1a1a1a;">CAMFiu</div>
<div class="t" style="left:588.50px;top:505.54px;font-size:12.35px;color:#1a1a1a;">9@</div>
<div class="t" style="left:823.30px;top:505.54px;font-size:12.35px;color:#1a1a1a;">user26633572440...</div>
<div class="t" style="left:948.30px;top:505.54px;font-size:12.35px;color:#1a1a1a;">nagiyaramjuy@h...</div>
<div class="t" style="left:1222.70px;top:505.54px;font-size:12.35px;color:#1a1a1a;">Live</div>
<div class="r" style="left:316px;top:503px;width:11px;height:11px;border:1px solid #333;background:#fff"></div>
<svg class="r" style="left:316px;top:503px;" width="13" height="13" viewBox="0 0 13 13"><path d="M2.5 6.5 L5.3 9.3 L10.5 3.5" fill="none" stroke="#333" stroke-width="1.3"/></svg>
<div class="t" style="left:353.50px;top:546.54px;font-size:12.35px;color:#1a1a1a;">7</div>
<div class="t" style="left:423.30px;top:546.54px;font-size:12.35px;color:#1a1a1a;">khi.chin.thn5</div>
<div class="t" style="left:523.00px;top:546.54px;font-size:12.35px;color:#1a1a1a;">duJHXk</div>
<div class="t" style="left:591.50px;top:546.54px;font-size:12.35px;color:#1a1a1a;">@</div>
<div class="t" style="left:823.30px;top:546.54px;font-size:12.35px;color:#1a1a1a;">user87521117013...</div>
<div class="t" style="left:948.30px;top:546.54px;font-size:12.35px;color:#1a1a1a;">margpough439@...</div>
<div class="t" style="left:1222.70px;top:546.54px;font-size:12.35px;color:#1a1a1a;">Live</div>
<div class="r" style="left:316px;top:544px;width:11px;height:11px;border:1px solid #333;background:#fff"></div>
<svg class="r" style="left:316px;top:544px;" width="13" height="13" viewBox="0 0 13 13"><path d="M2.5 6.5 L5.3 9.3 L10.5 3.5" fill="none" stroke="#333" stroke-width="1.3"/></svg>
<div class="t" style="left:353.50px;top:587.54px;font-size:12.35px;color:#1a1a1a;">8</div>
<div class="t" style="left:423.30px;top:587.54px;font-size:12.35px;color:#1a1a1a;">hazirlyhdal</div>
<div class="t" style="left:523.00px;top:587.54px;font-size:12.35px;color:#1a1a1a;">jX8KR8</div>
<div class="t" style="left:823.30px;top:587.54px;font-size:12.35px;color:#1a1a1a;">user13379092846...</div>
<div class="t" style="left:948.30px;top:587.54px;font-size:12.35px;color:#1a1a1a;">haziruiledd@hot...</div>
<div class="t" style="left:1222.70px;top:587.54px;font-size:12.35px;color:#1a1a1a;">Live</div>
<div class="r" style="left:316px;top:585px;width:11px;height:11px;border:1px solid #333;background:#fff"></div>
<svg class="r" style="left:316px;top:585px;" width="13" height="13" viewBox="0 0 13 13"><path d="M2.5 6.5 L5.3 9.3 L10.5 3.5" fill="none" stroke="#333" stroke-width="1.3"/></svg>
<div class="t" style="left:353.50px;top:628.54px;font-size:12.35px;color:#1a1a1a;">9</div>
<div class="t" style="left:423.30px;top:628.54px;font-size:12.35px;color:#1a1a1a;">dyc80try555y8</div>
<div class="t" style="left:523.00px;top:628.54px;font-size:12.35px;color:#1a1a1a;">YmXMjt</div>
<div class="t" style="left:592.00px;top:628.54px;font-size:12.35px;color:#1a1a1a;">9@</div>
<div class="t" style="left:823.30px;top:628.54px;font-size:12.35px;color:#1a1a1a;">user82813985272...</div>
<div class="t" style="left:948.30px;top:628.54px;font-size:12.35px;color:#1a1a1a;">deonmera436@d...</div>
<div class="t" style="left:1222.70px;top:628.54px;font-size:12.35px;color:#1a1a1a;">Live</div>
<div class="r" style="left:316px;top:626px;width:11px;height:11px;border:1px solid #333;background:#fff"></div>
<svg class="r" style="left:316px;top:626px;" width="13" height="13" viewBox="0 0 13 13"><path d="M2.5 6.5 L5.3 9.3 L10.5 3.5" fill="none" stroke="#333" stroke-width="1.3"/></svg>
<div class="t" style="left:353.50px;top:669.54px;font-size:12.35px;color:#1a1a1a;">10</div>
<div class="t" style="left:423.30px;top:669.54px;font-size:12.35px;color:#1a1a1a;">l.linh1848</div>
<div class="t" style="left:523.00px;top:669.54px;font-size:12.35px;color:#1a1a1a;">FSo5cS</div>
<div class="t" style="left:589.00px;top:669.54px;font-size:12.35px;color:#1a1a1a;">s!</div>
<div class="t" style="left:823.30px;top:669.54px;font-size:12.35px;color:#1a1a1a;">user82842054624...</div>
<div class="t" style="left:948.30px;top:669.54px;font-size:12.35px;color:#1a1a1a;">ayannasae269@g...</div>
<div class="t" style="left:1222.70px;top:669.54px;font-size:12.35px;color:#1a1a1a;">Live</div>
<div class="r" style="left:316px;top:667px;width:11px;height:11px;border:1px solid #333;background:#fff"></div>
<svg class="r" style="left:316px;top:667px;" width="13" height="13" viewBox="0 0 13 13"><path d="M2.5 6.5 L5.3 9.3 L10.5 3.5" fill="none" stroke="#333" stroke-width="1.3"/></svg>
<div class="t" style="left:353.50px;top:710.54px;font-size:12.35px;color:#1a1a1a;">11</div>
<div class="t" style="left:423.30px;top:710.54px;font-size:12.35px;color:#1a1a1a;">hunh.nh989</div>
<div class="t" style="left:523.00px;top:710.54px;font-size:12.35px;color:#1a1a1a;">xaNGtl/</div>
<div class="t" style="left:588.00px;top:710.54px;font-size:12.35px;color:#1a1a1a;">3@</div>
<div class="t" style="left:823.30px;top:710.54px;font-size:12.35px;color:#1a1a1a;">user43150699869...</div>
<div class="t" style="left:948.30px;top:710.54px;font-size:12.35px;color:#1a1a1a;">susanhahn943@ic...</div>
<div class="t" style="left:1222.70px;top:710.54px;font-size:12.35px;color:#1a1a1a;">Live</div>
<div class="r" style="left:316px;top:708px;width:11px;height:11px;border:1px solid #333;background:#fff"></div>
<svg class="r" style="left:316px;top:708px;" width="13" height="13" viewBox="0 0 13 13"><path d="M2.5 6.5 L5.3 9.3 L10.5 3.5" fill="none" stroke="#333" stroke-width="1.3"/></svg>
<div class="t" style="left:353.50px;top:751.54px;font-size:12.35px;color:#1a1a1a;">12</div>
<div class="t" style="left:423.30px;top:751.54px;font-size:12.35px;color:#1a1a1a;">yu.cj.nhung.n...</div>
<div class="t" style="left:523.00px;top:751.54px;font-size:12.35px;color:#1a1a1a;">sDD0Fl</div>
<div class="t" style="left:589.00px;top:751.54px;font-size:12.35px;color:#1a1a1a;">@</div>
<div class="t" style="left:948.30px;top:751.54px;font-size:12.35px;color:#1a1a1a;">patrinacowan965...</div>
<div class="t" style="left:1222.70px;top:751.54px;font-size:12.35px;color:#1a1a1a;">Live</div>
<div class="r" style="left:316px;top:749px;width:11px;height:11px;border:1px solid #333;background:#fff"></div>
<svg class="r" style="left:316px;top:749px;" width="13" height="13" viewBox="0 0 13 13"><path d="M2.5 6.5 L5.3 9.3 L10.5 3.5" fill="none" stroke="#333" stroke-width="1.3"/></svg>
<div class="t" style="left:353.50px;top:792.54px;font-size:12.35px;color:#1a1a1a;">13</div>
<div class="t" style="left:423.30px;top:792.54px;font-size:12.35px;color:#1a1a1a;">ebe.gm.2l75</div>
<div class="t" style="left:523.00px;top:792.54px;font-size:12.35px;color:#1a1a1a;">O9KrNu</div>
<div class="t" style="left:590.00px;top:792.54px;font-size:12.35px;color:#1a1a1a;">4@</div>
<div class="t" style="left:948.30px;top:792.54px;font-size:12.35px;color:#1a1a1a;">amyrothermel550...</div>
<div class="t" style="left:1222.70px;top:792.54px;font-size:12.35px;color:#1a1a1a;">Live</div>
<div class="r" style="left:316px;top:790px;width:11px;height:11px;border:1px solid #333;background:#fff"></div>
<svg class="r" style="left:316px;top:790px;" width="13" height="13" viewBox="0 0 13 13"><path d="M2.5 6.5 L5.3 9.3 L10.5 3.5" fill="none" stroke="#333" stroke-width="1.3"/></svg>
<div class="t" style="left:353.50px;top:833.54px;font-size:12.35px;color:#1a1a1a;">14</div>
<div class="t" style="left:423.30px;top:833.54px;font-size:12.35px;color:#1a1a1a;">cao.minh.anh...</div>
<div class="t" style="left:523.00px;top:833.54px;font-size:12.35px;color:#1a1a1a;">2kHqpE</div>
<div class="t" style="left:948.30px;top:833.54px;font-size:12.35px;color:#1a1a1a;">jacquilinekozlows...</div>
<div class="t" style="left:1222.70px;top:833.54px;font-size:12.35px;color:#1a1a1a;">Live</div>
<div class="r" style="left:316px;top:831px;width:11px;height:11px;border:1px solid #333;background:#fff"></div>
<svg class="r" style="left:316px;top:831px;" width="13" height="13" viewBox="0 0 13 13"><path d="M2.5 6.5 L5.3 9.3 L10.5 3.5" fill="none" stroke="#333" stroke-width="1.3"/></svg>
<div class="t" style="left:353.50px;top:874.54px;font-size:12.35px;color:#1a1a1a;">15</div>
<div class="t" style="left:423.30px;top:874.54px;font-size:12.35px;color:#1a1a1a;">minh.anh7014</div>
<div class="t" style="left:523.00px;top:874.54px;font-size:12.35px;color:#1a1a1a;">iww0VH</div>
<div class="t" style="left:588.00px;top:874.54px;font-size:12.35px;color:#1a1a1a;">3$</div>
<div class="t" style="left:948.30px;top:874.54px;font-size:12.35px;color:#1a1a1a;">philomenagalind...</div>
<div class="t" style="left:1222.70px;top:874.54px;font-size:12.35px;color:#1a1a1a;">Live</div>
<div class="r" style="left:316px;top:872px;width:11px;height:11px;border:1px solid #333;background:#fff"></div>
<svg class="r" style="left:316px;top:872px;" width="13" height="13" viewBox="0 0 13 13"><path d="M2.5 6.5 L5.3 9.3 L10.5 3.5" fill="none" stroke="#333" stroke-width="1.3"/></svg>
<div class="t" style="left:353.50px;top:915.54px;font-size:12.35px;color:#1a1a1a;">16</div>
<div class="t" style="left:423.30px;top:915.54px;font-size:12.35px;color:#1a1a1a;">ng.lm.19952</div>
<div class="t" style="left:523.00px;top:915.54px;font-size:12.35px;color:#1a1a1a;">Q8L86V</div>
<div class="t" style="left:590.00px;top:915.54px;font-size:12.35px;color:#1a1a1a;">4!</div>
<div class="t" style="left:948.30px;top:915.54px;font-size:12.35px;color:#1a1a1a;">ellafly383@doco...</div>
<div class="t" style="left:1222.70px;top:915.54px;font-size:12.35px;color:#1a1a1a;">Live</div>
<div class="r" style="left:316px;top:913px;width:11px;height:11px;border:1px solid #333;background:#fff"></div>
<svg class="r" style="left:316px;top:913px;" width="13" height="13" viewBox="0 0 13 13"><path d="M2.5 6.5 L5.3 9.3 L10.5 3.5" fill="none" stroke="#333" stroke-width="1.3"/></svg>
<div class="t" style="left:353.50px;top:956.54px;font-size:12.35px;color:#1a1a1a;">17</div>
<div class="t" style="left:423.30px;top:956.54px;font-size:12.35px;color:#1a1a1a;">lan.phng474</div>
<div class="t" style="left:523.00px;top:956.54px;font-size:12.35px;color:#1a1a1a;">h5zjwAi</div>
<div class="t" style="left:588.00px;top:956.54px;font-size:12.35px;color:#1a1a1a;">78*</div>
<div class="t" style="left:948.30px;top:956.54px;font-size:12.35px;color:#1a1a1a;">lanniewagers500...</div>
<div class="t" style="left:1222.70px;top:956.54px;font-size:12.35px;color:#1a1a1a;">Live</div>
<div class="r" style="left:316px;top:954px;width:11px;height:11px;border:1px solid #333;background:#fff"></div>
<svg class="r" style="left:316px;top:954px;" width="13" height="13" viewBox="0 0 13 13"><path d="M2.5 6.5 L5.3 9.3 L10.5 3.5" fill="none" stroke="#333" stroke-width="1.3"/></svg>
<div class="r" style="left:565px;top:327px;width:25px;height:654px;background:#fff;"></div>
<div class="r" style="left:565px;top:285px;width:25px;height:42px;background:#0078d7;"></div>
<div class="r" style="left:565px;top:448px;width:25px;height:7px;background:#6e6e6e;"></div>
<div class="r" style="left:565px;top:776px;width:25px;height:7px;background:#6e6e6e;"></div>
<div class="r" style="left:581px;top:303px;width:8px;height:8px;background:#f6c6dd;"></div>
<div class="r" style="left:566px;top:344px;width:7px;height:8px;background:#9ad9f6;"></div>
<div class="r" style="left:581px;top:344px;width:8px;height:8px;background:#c57822;"></div>
<div class="r" style="left:573px;top:392px;width:8px;height:8px;background:#8b4513;"></div>
<div class="r" style="left:581px;top:384px;width:8px;height:16px;background:#1b1b1b;"></div>
<div class="r" style="left:573px;top:432px;width:8px;height:8px;background:#90d8f6;"></div>
<div class="r" style="left:566px;top:472px;width:7px;height:7px;background:#fff6b8;"></div>
<div class="r" style="left:565px;top:511px;width:8px;height:8px;background:#6b1e48;"></div>
<div class="r" style="left:581px;top:552px;width:8px;height:8px;background:#c57822;"></div>
<div class="r" style="left:565px;top:592px;width:8px;height:8px;background:#6b2970;"></div>
<div class="r" style="left:565px;top:632px;width:8px;height:8px;background:#1b1b1b;"></div>
<div class="r" style="left:581px;top:632px;width:8px;height:8px;background:#1b1b1b;"></div>
<div class="r" style="left:565px;top:672px;width:8px;height:8px;background:#6b1e48;"></div>
<div class="r" style="left:581px;top:672px;width:8px;height:8px;background:#9a9a50;"></div>
<div class="r" style="left:573px;top:712px;width:8px;height:15px;background:#fffbc8;"></div>
<div class="r" style="left:581px;top:720px;width:8px;height:7px;background:#fffbc8;"></div>
<div class="r" style="left:565px;top:712px;width:8px;height:8px;background:#c57822;"></div>
<div class="r" style="left:566px;top:759px;width:8px;height:8px;background:#1b1b1b;"></div>
<div class="r" style="left:565px;top:800px;width:8px;height:8px;background:#3f8fe0;"></div>
<div class="r" style="left:573px;top:800px;width:8px;height:8px;background:#a0501a;"></div>
<div class="r" style="left:581px;top:800px;width:8px;height:8px;background:#fff6b8;"></div>
<div class="r" style="left:573px;top:840px;width:8px;height:8px;background:#dff6f9;"></div>
<div class="r" style="left:581px;top:840px;width:8px;height:8px;background:#6b2970;"></div>
<div class="r" style="left:566px;top:881px;width:8px;height:8px;background:#1b1b1b;"></div>
<div class="r" style="left:565px;top:921px;width:8px;height:8px;background:#3f8fe0;"></div>
<div class="r" style="left:573px;top:921px;width:8px;height:8px;background:#6b2970;"></div>
<div class="r" style="left:581px;top:921px;width:8px;height:8px;background:#d48b45;"></div>
<div class="r" style="left:565px;top:961px;width:8px;height:8px;background:#a7dff6;"></div>
<div class="r" style="left:573px;top:961px;width:8px;height:8px;background:#f6d79a;"></div>
<div class="r" style="left:581px;top:961px;width:8px;height:8px;background:#9a7a20;"></div>
<div class="r" style="left:1892px;top:245px;width:16px;height:740px;background:#f0f0f0;"></div>
<div class="r" style="left:1892px;top:262px;width:15px;height:602px;background:#cdcdcd;"></div>
<svg class="r" style="left:1894px;top:250px;" width="12" height="10" viewBox="0 0 12 10"><path d="M2 7 L6 3 L10 7" fill="none" stroke="#5a5a5a" stroke-width="2"/></svg>
<svg class="r" style="left:1894px;top:972px;" width="12" height="10" viewBox="0 0 12 10"><path d="M2 3 L6 7 L10 3" fill="none" stroke="#5a5a5a" stroke-width="2"/></svg>
<svg class="r" style="left:1312px;top:1004px;" width="32" height="19" viewBox="0 0 32 19"><defs><linearGradient id="fb" x1="0" y1="0" x2="1" y2="0.3"><stop offset="0" stop-color="#0a72ee"/><stop offset="1" stop-color="#6ccaff"/></linearGradient></defs><rect x="2.4" y="2.4" width="27" height="27" rx="6.5" fill="#fff" stroke="url(#fb)" stroke-width="2.8"/><g transform="translate(2.85,-5.9) scale(0.274)"><path d="M24.1 54.3 L12.6 74.5 Q11.5 77 12.5 79.5 L14.8 83.9 L32.4 83.9 L36.5 75.5 Z" fill="url(#og)"/><path d="M26.2 51.8 Q29 47 33.5 47 Q38 47 40.8 50.7 L52.1 71.5 Q45 72 37.9 74.7 Z" fill="url(#og)"/><path d="M33.9 83.9 A15.2 15.2 0 0 1 62.7 83.9 Z" fill="url(#og2)"/><path d="M48.1 63.4 L58.5 49.5 Q61 46.5 64 47 Q67.5 48 69.6 51.8 L57.6 73.6 Z" fill="url(#bg)"/><path d="M71.8 54.7 L83.2 74.5 Q84.3 77 83 79.5 L79.5 83.9 L64.2 83.9 L59 75.5 Z" fill="url(#bg)"/></g><rect x="5.5" y="17" width="21" height="2" fill="#2a8fe0" opacity="0.8"/></svg>
<div class="t" style="left:1352.50px;top:1014.47px;font-size:13.03px;font-weight:bold;color:#0b5fc0;">hungnh@phanmemmkt.vn</div>
<div class="t" style="left:1627.70px;top:1014.58px;font-size:12.90px;color:#222;">Thời hạn sử dụng còn :</div>
<div class="t" style="left:1801.40px;top:1011.57px;font-size:18.82px;font-weight:bold;color:#0b5fc0;">285</div>
<div class="t" style="left:1872.00px;top:1014.62px;font-size:12.85px;color:#222;">Ngày</div>
</body></html>
